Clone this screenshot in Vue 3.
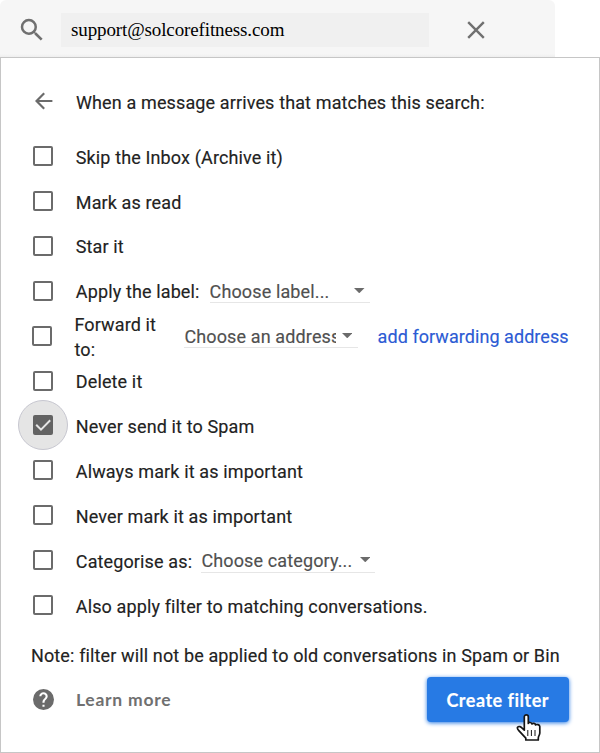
<script setup>
const rows = [
  { id: 'archive', label: 'Skip the Inbox (Archive it)' },
  { id: 'read', label: 'Mark as read' },
  { id: 'star', label: 'Star it' },
  { id: 'apply', label: 'Apply the label:', select: 'Choose label...' },
  { id: 'forward', label: 'Forward it to:', select: 'Choose an address', link: 'add forwarding address' },
  { id: 'delete', label: 'Delete it' },
  { id: 'never-spam', label: 'Never send it to Spam', checked: true },
  { id: 'important', label: 'Always mark it as important' },
  { id: 'unimportant', label: 'Never mark it as important' },
  { id: 'category', label: 'Categorise as:', select: 'Choose category...' },
  { id: 'existing', label: 'Also apply filter to matching conversations.' },
]
</script>

<template>
  <div class="page">
    <header class="search">
      <svg class="search-icon" viewBox="0 0 24 24">
        <path d="M15.5 14h-.79l-.28-.27A6.47 6.47 0 0 0 16 9.5 6.5 6.5 0 1 0 9.5 16c1.61 0 3.09-.59 4.23-1.57l.27.28v.79l5 4.99L20.49 19l-4.99-5zm-6 0a4.5 4.5 0 1 1 0-9 4.5 4.5 0 0 1 0 9z" />
      </svg>
      <div class="query">support@solcorefitness.com</div>
      <svg class="close-icon" viewBox="0 0 18 18"><path d="M1.2 1.2 16.8 16.8M16.8 1.2 1.2 16.8" /></svg>
    </header>

    <main class="panel">
      <div class="heading">
        <svg class="back-icon" viewBox="0 0 18 18"><path d="M17.4 9H2M9.2 1.2 1.5 9l7.7 7.8" /></svg>
        <span class="title">When a message arrives that matches this search:</span>
      </div>

      <div v-for="row in rows" :key="row.id" class="row" :class="row.id">
        <span class="halo" :class="{ active: row.checked }">
          <span class="box" :class="{ checked: row.checked }">
            <svg v-if="row.checked" viewBox="0 0 20 20"><path d="M3.2 9.8 8 14.6 17.2 5.2" /></svg>
          </span>
        </span>
        <span class="label"><span>{{ row.label }}</span></span>
        <span v-if="row.select" class="select">
          <span class="value">{{ row.select }}</span>
          <svg class="caret" viewBox="0 0 10 5"><path d="M0 0h10L5 5z" /></svg>
        </span>
        <a v-if="row.link" class="link">{{ row.link }}</a>
      </div>

      <p class="note">Note: filter will not be applied to old conversations in Spam or Bin</p>

      <footer class="footer">
        <svg class="help-icon" viewBox="2 2 20 20">
          <path d="M12 2a10 10 0 1 0 0 20 10 10 0 0 0 0-20zm1 17h-2v-2h2v2zm2.07-7.75-.9.92C13.45 12.9 13 13.5 13 15h-2v-.5c0-1.1.45-2.1 1.17-2.83l1.24-1.26A2 2 0 1 0 10 9H8a4 4 0 1 1 8 0c0 .88-.36 1.68-.93 2.25z" />
        </svg>
        <span class="learn">Learn more</span>
        <button class="create">
          <span>Create filter</span>
          <svg class="pointer" viewBox="0 0 26 28">
            <path d="M8.3 2.8c0-2.5 4-2.5 4 0v6.6c.3-1.4 3.4-1.2 3.7.6.6-1.1 3.3-.8 3.6 1 .8-1 4.2-.4 4.2 1.6v6.4c0 1.8-1.5 3.2-1.5 5V26H9.8v-1.8L3.3 17.2c-1.5-1.7-2.6-2.8-1.7-4 1.2-1.5 3.5-.3 4.6.9l2.1 2.1z" />
            <path class="fingers" d="M11.8 16v6M15.4 16v6M19 16v6" />
          </svg>
        </button>
      </footer>
    </main>
  </div>
</template>

<style>
body {
  margin: 0;
  background: #fff;
}
</style>

<style scoped>
.page {
  width: 600px;
  height: 753px;
  display: flex;
  flex-direction: column;
  overflow: hidden;
  background: #fff;
  font-family: Roboto, sans-serif;
  font-size: 18px;
  letter-spacing: 0.13px;
  color: #222;
  -webkit-text-stroke: 0.15px currentColor;
}
.search {
  box-sizing: border-box;
  width: 555px;
  height: 57px;
  flex: none;
  display: flex;
  align-items: flex-start;
  padding-top: 13px;
  border-radius: 6px 6px 0 0;
  background: linear-gradient(#f6f6f6 54px, #eee 57px);
}
.search-icon {
  width: 30px;
  height: 30px;
  margin: 2px 14px 0 17px;
  fill: #707070;
}
.query {
  box-sizing: border-box;
  width: 368px;
  height: 34px;
  padding-left: 10px;
  background: #f0f0f0;
  color: #000;
  font: 19px/34px 'Liberation Serif', serif;
  letter-spacing: -0.12px;
  white-space: nowrap;
  -webkit-text-stroke: 0;
}
.close-icon {
  width: 18px;
  height: 18px;
  margin: 8px 0 0 38px;
  fill: none;
  stroke: #707070;
  stroke-width: 2.4;
}
.panel {
  box-sizing: border-box;
  width: 600px;
  height: 696px;
  border: 1px solid #c6c6c6;
  padding: 0 30px 0 17.4px;
}
.heading {
  box-sizing: border-box;
  height: 75.7px;
  display: flex;
  align-items: center;
  padding-top: 13px;
}
.back-icon {
  width: 18px;
  height: 18px;
  margin: -2px 23.4px 0 16.2px;
  fill: none;
  stroke: #6b6b6b;
  stroke-width: 2.2;
}
.title {
  white-space: nowrap;
}
.row {
  height: 44.9px;
  display: flex;
  align-items: center;
  white-space: nowrap;
}
.halo {
  box-sizing: border-box;
  flex: none;
  display: grid;
  place-items: center;
  width: 50px;
  height: 50px;
  margin-right: 7.4px;
  border-radius: 50%;
}
.halo.active {
  border: 1px solid #c7c7d0;
  background: #e5e5e5;
}
.box {
  box-sizing: border-box;
  width: 20px;
  height: 20px;
  border: 2px solid #6b6b6b;
  border-radius: 2px;
}
.box.checked {
  border: 0;
  background: #636363;
}
.box svg {
  display: block;
  width: 20px;
  height: 20px;
  fill: none;
  stroke: #e5e5e5;
  stroke-width: 2;
}
.label {
  padding-top: 2px;
  line-height: 25px;
}
.forward .halo {
  margin: 0 7.5px 0 -1.5px;
}
.forward .label {
  width: 110px;
  white-space: normal;
}
.forward .label span {
  display: block;
  width: 90px;
}
.select {
  box-sizing: border-box;
  display: flex;
  align-items: center;
  justify-content: space-between;
  height: 23px;
  margin-top: 2px;
  border-bottom: 1px solid #e6e6e6;
  color: #505050;
}
.apply .select {
  width: 160px;
  margin-left: 10px;
}
.forward .select {
  width: 174px;
}
.category .select {
  width: 174px;
  margin-left: 9.3px;
}
.value {
  overflow: hidden;
}
.forward .value {
  width: 152px;
}
.caret {
  width: 10.5px;
  height: 5.3px;
  margin: -2px 5px 0 0;
  fill: #6b6b6b;
}
.forward .caret {
  margin-right: 6px;
}
.link {
  margin: 2px 0 0 19.2px;
  letter-spacing: 0.06px;
  color: #2c5bd4;
}
.note {
  margin: 17px 0 0 12.6px;
  line-height: 24px;
  white-space: nowrap;
}
.footer {
  display: flex;
  align-items: center;
  height: 45px;
  margin-top: 9px;
}
.help-icon {
  width: 21px;
  height: 21px;
  margin: 0 22px 0 14.6px;
  fill: #6b6b6b;
}
.learn {
  font: 700 17.5px Lato, sans-serif;
  letter-spacing: 0.75px;
  color: #707070;
  -webkit-text-stroke: 0;
}
.create {
  position: relative;
  width: 142.5px;
  height: 45px;
  margin: 0 0 0 auto;
  padding: 0;
  border: 0;
  border-radius: 4px;
  background: #277ae4;
  box-shadow: 0 1px 4px #277ae4;
  color: #fff;
  font: 700 18px Lato, sans-serif;
  letter-spacing: 0.5px;
}
.pointer {
  position: absolute;
  left: 89.5px;
  top: 37px;
  width: 26px;
  height: 28px;
  fill: #fff;
  stroke: #151515;
  stroke-width: 1.7;
  stroke-linejoin: round;
}
.pointer .fingers {
  stroke-width: 1;
}
</style>
